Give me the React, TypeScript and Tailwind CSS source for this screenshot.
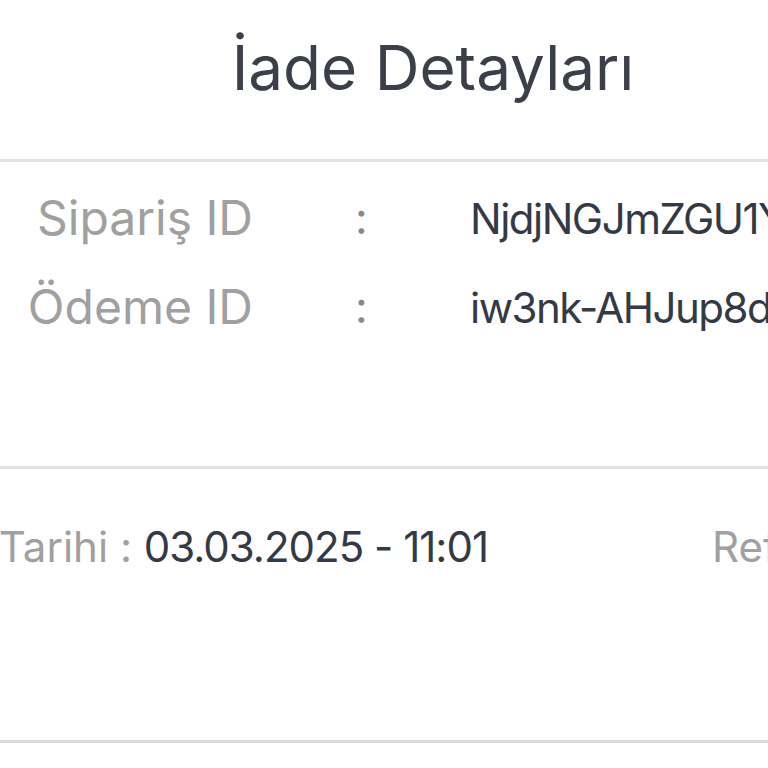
export default function App() {
  const rows = [
    { label: 'Sipariş ID', value: 'NjdjNGJmZGU1YzQ2MTAwMDFh' },
    { label: 'Ödeme ID', value: 'iw3nk-AHJup8dQ2x' },
  ];

  return (
    <div className="w-[768px] h-[768px] overflow-hidden bg-white font-['Inter','Noto_Sans',sans-serif]">
      {/* Title */}
      <div className="flex justify-center pl-[98px] pt-[30px] h-[159px]">
        <h2 className="text-[62px] leading-[76px] font-normal text-[#3a3f4a] whitespace-nowrap">İade Detayları</h2>
      </div>
      <div className="h-[3px] bg-[#e2e2e2]" />

      {/* IDs */}
      <div className="flex flex-col gap-[29px] pt-[26px] h-[304px]">
        {rows.map((row) => (
          <div key={row.label} className="flex items-center h-[60px] whitespace-nowrap">
            <span className="w-[253px] shrink-0 text-right text-[48px] text-[#a0a0a0]">{row.label}</span>
            <span className="w-[217px] shrink-0 pl-[102px] text-[44px] text-[#8a8a8a]">:</span>
            <span className="shrink-0 text-[42px] tracking-[-1.5px] text-[#343a45]">{row.value}</span>
          </div>
        ))}
      </div>
      <div className="h-[3px] bg-[#e2e2e2]" />

      {/* Dates */}
      <div className="flex items-start pt-[48px] h-[271px] text-[42px] leading-[60px] whitespace-nowrap">
        <div className="flex justify-end w-[488px] shrink-0">
          <span className="text-[#a0a0a0]">İade Tarihi :&nbsp;</span>
          <span className="text-[#343a45] tracking-[-1px]">03.03.2025 - 11:01</span>
        </div>
        <span className="ml-[224px] text-[#a0a0a0]">Referans No</span>
      </div>
      <div className="h-[3px] bg-[#dcdcdc]" />
    </div>
  );
}
